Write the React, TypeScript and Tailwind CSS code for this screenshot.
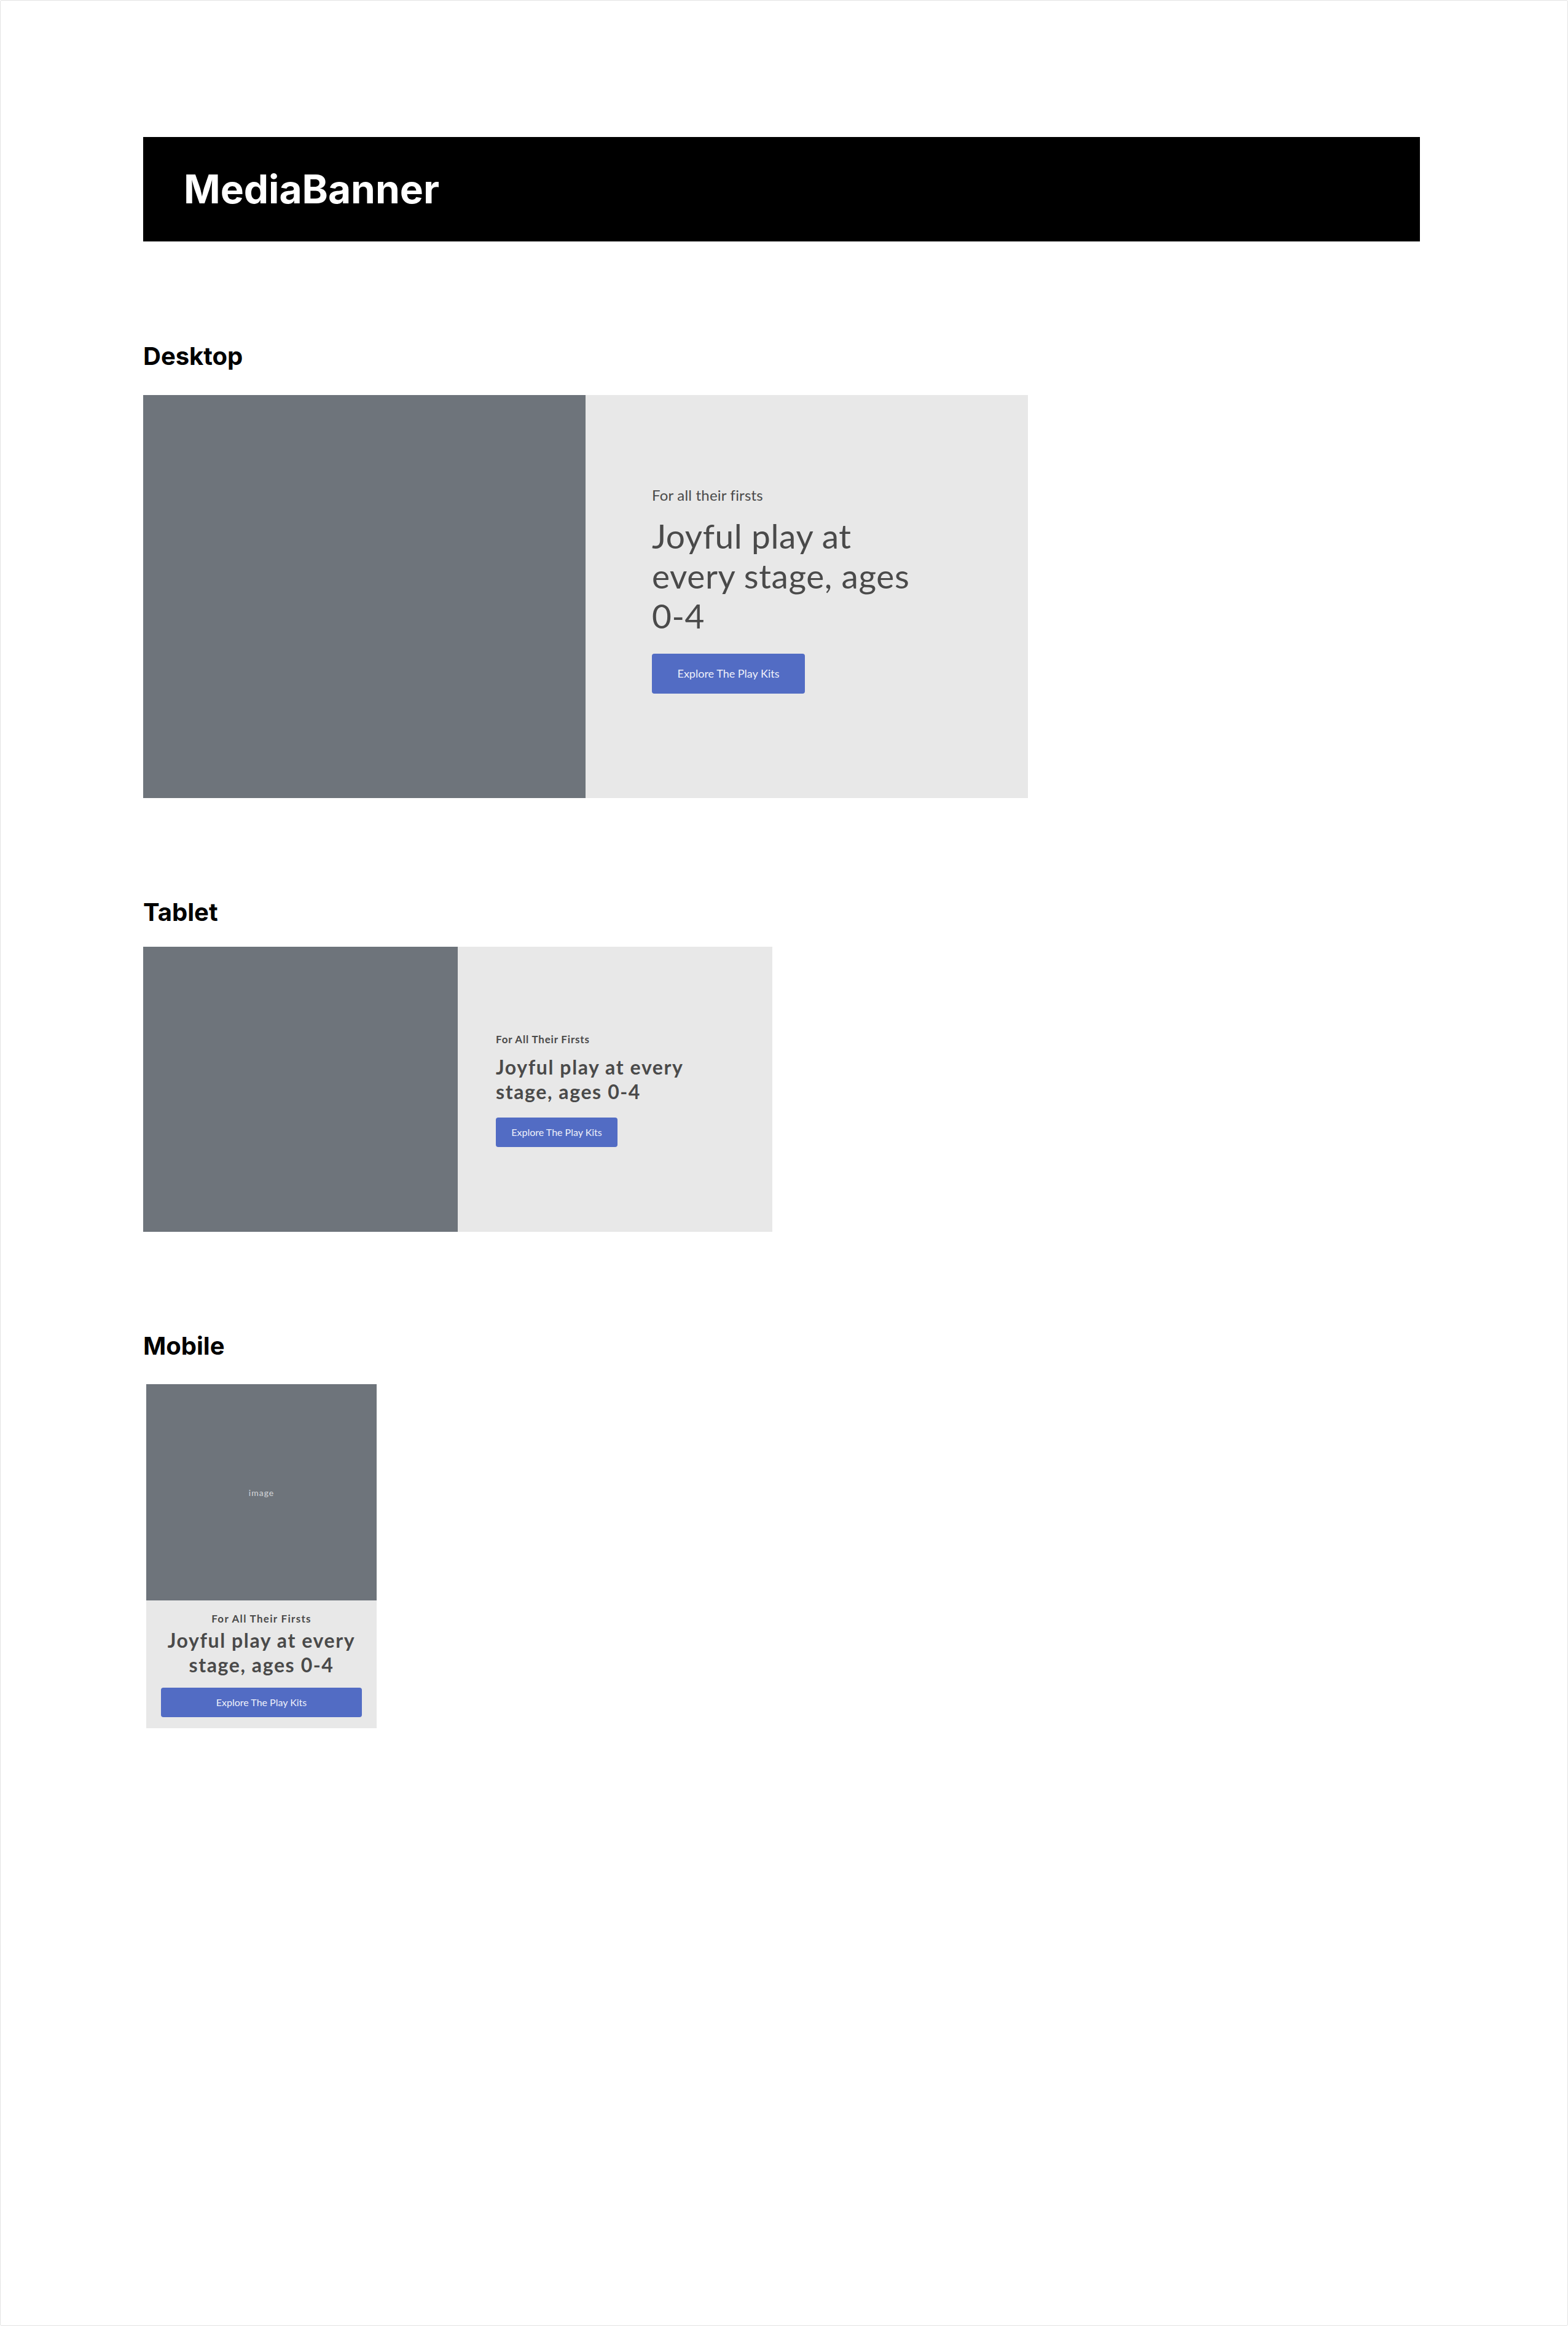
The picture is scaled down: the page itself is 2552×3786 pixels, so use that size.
import React from "react";

const heading = "font-['Inter',sans-serif] font-bold text-[40px] leading-[48px] text-black";
const banner = "font-['Lato','Noto_Sans',sans-serif]";

function DesktopBanner() {
  return (
    <div className={`flex w-[1440px] h-[656px] ${banner}`}>
      <div className="w-[720px] h-full bg-[#6e747b]" />
      <div className="w-[720px] h-full bg-[#e8e8e8] flex flex-col justify-center pl-[108px] pb-[24px]">
        <p className="text-[24px] leading-[32px] tracking-[0.2px] text-[#4a4a4a]">For all their firsts</p>
        <h2 className="mt-[18px] max-w-[440px] text-[55px] leading-[65px] tracking-[0.6px] font-normal text-[#4a4a4a]">
          Joyful play at every stage, ages 0-4
        </h2>
        <div className="mt-[29px]">
          <button className="inline-flex items-center justify-center w-[249px] h-[65px] rounded-[4px] bg-[#526cc4] text-[18px] text-[#eef0fa]">
            Explore The Play Kits
          </button>
        </div>
      </div>
    </div>
  );
}

function TabletBanner() {
  return (
    <div className={`flex w-[1024px] h-[464px] ${banner}`}>
      <div className="w-[512px] h-full bg-[#6e747b]" />
      <div className="w-[512px] h-full bg-[#e8e8e8] flex flex-col justify-center pl-[62px]">
        <p className="text-[17px] leading-[24px] font-bold tracking-[0.8px] text-[#4a4a4a]">For All Their Firsts</p>
        <h2 className="mt-[13px] max-w-[350px] text-[32px] leading-[40px] font-bold tracking-[1.6px] text-[#4a4a4a]">
          Joyful play at every stage, ages 0-4
        </h2>
        <div className="mt-[22px]">
          <button className="inline-flex items-center justify-center w-[198px] h-[48px] rounded-[4px] bg-[#526cc4] text-[16px] text-[#eef0fa]">
            Explore The Play Kits
          </button>
        </div>
      </div>
    </div>
  );
}

function MobileBanner() {
  return (
    <div className={`ml-[5px] w-[375px] flex flex-col ${banner}`}>
      <div className="h-[352px] bg-[#6e747b] flex items-center justify-center">
        <span className="text-[14px] tracking-[1px] text-[#d4d6da]">image</span>
      </div>
      <div className="bg-[#e8e8e8] px-6 pt-[18px] pb-[18px] flex flex-col items-center text-center">
        <p className="text-[17px] leading-[24px] font-bold tracking-[1.3px] text-[#4a4a4a]">For All Their Firsts</p>
        <h2 className="mt-[3px] text-[32px] leading-[40px] font-bold tracking-[1.6px] text-[#4a4a4a]">
          Joyful play at every stage, ages 0-4
        </h2>
        <button className="mt-[17px] flex items-center justify-center w-full h-[48px] rounded-[4px] bg-[#526cc4] text-[16px] text-[#eef0fa]">
          Explore The Play Kits
        </button>
      </div>
    </div>
  );
}

export default function App() {
  return (
    <div className="w-[2552px] h-[3786px] bg-white border border-[#e2e2e2] rounded-[3px]">
      <div className="ml-[232px] mt-[222px] w-[2078px] flex flex-col">
        <header className="h-[170px] bg-black flex items-center pl-[66px] pr-16">
          <h1 className="font-['Inter',sans-serif] font-bold text-[64px] leading-none text-white">MediaBanner</h1>
        </header>

        <section className="mt-[163px]">
          <h3 className={`${heading} mb-[39px]`}>Desktop</h3>
          <DesktopBanner />
        </section>

        <section className="mt-[162px]">
          <h3 className={`${heading} mb-[32px]`}>Tablet</h3>
          <TabletBanner />
        </section>

        <section className="mt-[162px]">
          <h3 className={`${heading} mb-[38px]`}>Mobile</h3>
          <MobileBanner />
        </section>
      </div>
    </div>
  );
}
